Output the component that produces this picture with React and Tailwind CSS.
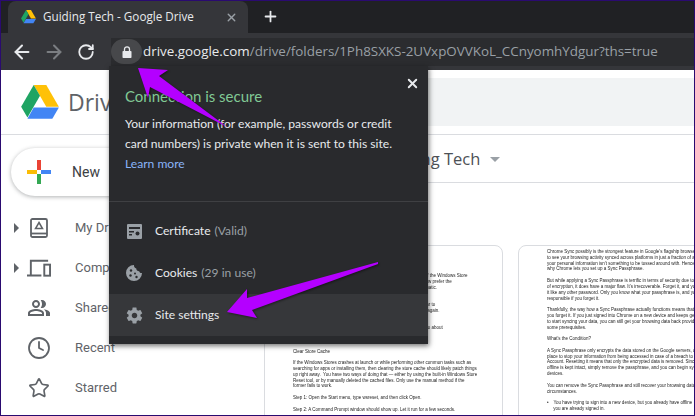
import { X, Plus, ArrowLeft, ArrowRight, RotateCw, Clock, Star } from "lucide-react";

const doc1 = [
  ["Lately, I have been having all sorts of issues with the default apps of the Windows Store", "and I have moved on to their desktop counterparts instead. And I now prefer the", "desktop versions of the apps since they are faster, stable and automatic.", "Really."],
  ["The Windows Store has always had its quirks, but when it did appear to", "be functioning I kept running into a load of issues, never seek once again.", "So."],
  ["So if you are having issues with the Store, here is how you should go about", "fixing it once and for all, since the fixes out there are numerous", "Here."],
  ["Clear Store Cache"],
  ["If the Windows Stores crashes at launch or while performing other common tasks such as", "searching for apps or installing them, then clearing the store cache should likely patch things", "up right away.  You have two ways of doing that — either by using the built-in Windows Store", "Reset tool, or by manually deleted the cached files. Only use the manual method if the", "former fails to work."],
  ["Step 1: Open the Start menu, type wsreset, and then click Open."],
  ["Step 2: A Command Prompt window should show up. Let it run for a few seconds."],
];

const doc2 = [
  ["Chrome Sync possibly is the strongest feature in Google's flagship browser. It lets", "to see your browsing activity synced across platforms in just a fraction of a", "your personal information isn't something to be tossed around with. Hence", "why Chrome lets you set up a Sync Passphrase."],
  ["But while applying a Sync Passphrase is terrific in terms of security due to the", "of encryption, it does have a major flaw. It's irrecoverable. Forget it, and you", "it like any other password. Only you know what your passphrase is, and you", "responsible if you forget it."],
  ["Thankfully, the way how a Sync Passphrase actually functions means that all", "you forget it. If you just signed into Chrome on a new device and keeps getting", "to start syncing your data, you can still get your browsing data back provided", "some prerequisites."],
  ["What's the Condition?"],
  ["A Sync Passphrase only encrypts the data stored on the Google servers, and", "place to stop your information from being accessed in case of a breach to your", "Account. Resetting it means that only the encrypted data is removed. Since", "offline is kept intact, simply remove the passphrase, and you can begin sync", "devices."],
  ["You can remove the Sync Passphrase and still recover your browsing data under", "circumstances."],
  ["•    You have trying to sign into a new device, but you already have offline", "     you are already signed in."],
];

function DriveLogo({ size }) {
  return (
    <svg width={size} height={size * 0.89} viewBox="0 0 87 78">
      <path d="M29 0 L58 0 L87 50 L58 50 Z" fill="#ffc107" />
      <path d="M29 0 L43.5 25 L14.5 75 L0 50 Z" fill="#1fa463" />
      <path d="M29 52 L87 52 L72 78 L14.5 78 Z" fill="#4285f4" />
    </svg>
  );
}

function DocText({ lines }) {
  return (
    <div className="text-[4.5px] leading-[5.82px] text-[#222] whitespace-pre blur-[0.3px] font-['Liberation_Sans',sans-serif]">
      {lines.map((p, i) => (
        <div key={i} className="mb-[5.82px]">
          {p.map((l, j) => (
            <div key={j}>{l}</div>
          ))}
        </div>
      ))}
    </div>
  );
}

function SideRow({ icon, label, arrow }) {
  return (
    <div className="h-10 flex items-center relative pl-[26px]">
      {arrow && <div className="absolute left-[13px] w-0 h-0 border-y-[5px] border-y-transparent border-l-[5px] border-l-[#5f6368]" />}
      <div className="w-[24px] flex justify-center text-[#5f6368]">{icon}</div>
      <span className="ml-[24px] text-[13px] text-[#5f6368] whitespace-nowrap font-['Roboto',sans-serif]">{label}</span>
    </div>
  );
}

function PopRow({ icon, label, note, active }) {
  return (
    <div className={`h-[42px] flex items-center pl-[17px] ${active ? "bg-[#36373a]" : ""}`}>
      <div className="w-[16px] flex justify-center text-[#9aa0a6]">{icon}</div>
      <span className="ml-[13px] text-[12.1px] text-[#e8eaed] font-['Lato',sans-serif]">{label}</span>
      {note && <span className="ml-1 text-[12.1px] text-[#9aa0a6] font-['Lato',sans-serif]">{note}</span>}
    </div>
  );
}

export default function App() {
  return (
    <div className="w-[695px] h-[416px] relative overflow-hidden bg-white border border-[#2a0a70] font-['Open_Sans',sans-serif]">
      {/* tabs */}
      <div className="h-[32px] bg-[#202124] flex items-end pl-[7px]">
        <div className="w-[240px] h-[32px] bg-[#35363a] rounded-t-lg flex items-center pl-[13px]">
          <DriveLogo size={15} />
          <span className="ml-[7px] text-[11.7px] text-[#e8eaed] whitespace-nowrap">Guiding Tech - Google Drive</span>
          <X size={13} strokeWidth={2.5} className="ml-[31px] text-[#9aa0a6]" />
        </div>
        <Plus size={17} strokeWidth={2.5} className="ml-[14px] mb-[8px] text-[#e8eaed]" />
      </div>

      {/* toolbar */}
      <div className="h-[37px] bg-[#35363a] flex items-center pl-[10px]">
        <ArrowLeft size={22} strokeWidth={2.2} className="text-[#e8eaed]" />
        <ArrowRight size={22} strokeWidth={2.2} className="ml-[10px] text-[#7b7e82]" />
        <RotateCw size={18} strokeWidth={2.4} className="ml-[12px] text-[#e8eaed]" />
        <div className="ml-[16px] flex-1 h-[28px] bg-[#2b2c2f] flex items-center">
          <div className="w-[31px] h-[25px] rounded-full bg-[#47484b] flex items-center justify-center">
            <svg width="10" height="12" viewBox="0 0 10 12" className="text-[#e8eaed]">
              <path d="M2.500 5V3.300a2.500 2.500 0 0 1 5 0V5" fill="none" stroke="currentColor" strokeWidth="1.300" />
              <rect x="0.500" y="5" width="9" height="7" rx="0.800" fill="currentColor" />
            </svg>
          </div>
          <span className="ml-[1px] text-[13.4px] text-[#e8eaed] whitespace-nowrap">
            drive.google.com<span className="text-[#9aa0a6]">/drive/folders/1Ph8SXKS-2UVxpOVVKoL_CCnyomhYdgur?ths=true</span>
          </span>
        </div>
      </div>

      {/* drive page */}
      <div className="h-[65px] flex items-center border-b border-[#dadce0]">
        <div className="ml-[20px]"><DriveLogo size={38} /></div>
        <span className="ml-[9px] text-[23px] text-[#5f6368]">Drive</span>
        <div className="ml-auto w-[340px] h-[48px] bg-[#f1f3f4]" />
      </div>

      <div className="flex">
        <div className="w-[263px] shrink-0">
          <div className="ml-[10px] mt-[13px] mb-[12px] w-[140px] h-[48px] rounded-full bg-white shadow-[0_1px_4px_rgba(60,64,67,0.4)] flex items-center pl-[16px]">
            <svg width="24" height="24" viewBox="0 0 24 24">
              <path d="M10 0h4v10h-4z" fill="#ea4335" />
              <path d="M14 10h10v4H14z" fill="#4285f4" />
              <path d="M10 14h4v10h-4z" fill="#34a853" />
              <path d="M0 10h10v4H0z" fill="#fbbc05" />
            </svg>
            <span className="ml-[21px] text-[14px] text-[#3c4043] font-['Roboto',sans-serif]">New</span>
          </div>
          <SideRow arrow label="My Drive" icon={
            <svg width="18" height="20" viewBox="0 0 18 20" fill="none" stroke="currentColor" strokeWidth="1.800">
              <rect x="1" y="1" width="16" height="18" rx="1.500" />
              <path d="M1 15.500h16" />
              <path d="M9 4.500l3.500 6h-7z" strokeWidth="1.500" />
            </svg>
          } />
          <SideRow arrow label="Computers" icon={
            <svg width="25" height="18" viewBox="0 0 25 18" fill="none" stroke="currentColor" strokeWidth="2">
              <path d="M4 16V1.500h18M0 16.800h15" />
              <rect x="18" y="5.500" width="6" height="11.500" />
            </svg>
          } />
          <SideRow label="Shared with me" icon={
            <svg width="26" height="26" viewBox="0 0 24 24" fill="currentColor">
              <path d="M16.670 13.130C18.040 14.060 19 15.320 19 17v3h4v-3c0-2.180-3.570-3.470-6.330-3.870zM15 12c2.210 0 4-1.790 4-4s-1.790-4-4-4c-.47 0-.91.1-1.330.24C14.500 5.270 15 6.580 15 8s-.5 2.730-1.330 3.760c.42.14.86.24 1.330.24zM9 12c2.210 0 4-1.790 4-4s-1.790-4-4-4-4 1.790-4 4 1.790 4 4 4zm0-6c1.100 0 2 .9 2 2s-.9 2-2 2-2-.9-2-2 .9-2 2-2zM9 13c-2.670 0-8 1.340-8 4v3h16v-3c0-2.660-5.330-4-8-4zm6 5H3v-.99C3.200 16.290 6.300 15 9 15s5.800 1.290 6 2v1z" />
            </svg>
          } />
          <SideRow label="Recent" icon={<Clock size={24} strokeWidth={1.800} />} />
          <SideRow label="Starred" icon={<Star size={22} strokeWidth={1.800} />} />
        </div>

        <div className="flex-1 relative">
          <div className="h-[48px] flex items-center pt-[1px] pl-[116px] border-b border-[#dadce0] text-[16.5px] text-[#4d5156] whitespace-nowrap -ml-[14px]">
            <span className="ml-[14px]">Guiding Tech</span>
            <div className="ml-[10px] w-0 h-0 border-x-[5px] border-x-transparent border-t-[5px] border-t-[#9aa0a6]" />
          </div>
          <div className="mt-[62px] flex gap-[15px]">
            <div className="w-[239px] h-[200px] shrink-0 border border-[#dadce0] rounded-t-lg pt-[27px] pl-[28px] overflow-hidden">
              <DocText lines={doc1} />
            </div>
            <div className="w-[239px] h-[200px] shrink-0 border border-[#dadce0] rounded-t-lg pt-[3px] pl-[28px] overflow-hidden">
              <DocText lines={doc2} />
            </div>
          </div>
        </div>
      </div>

      {/* security popup */}
      <div className="absolute left-[108px] top-[65px] w-[319px] h-[278px] bg-[#292a2d] shadow-[1px_2px_5px_rgba(0,0,0,0.55)] font-['Lato',sans-serif]">
        <X size={15} strokeWidth={3} className="absolute right-[8px] top-[10px] text-[#e8eaed]" />
        <div className="h-[136px] pt-[20px] pl-[16px] border-b border-[#3f4043]">
          <div className="text-[15px] leading-[20px] text-[#81c995]">Connection is secure</div>
          <div className="mt-[8px] text-[12.1px] leading-[20px] text-[#e8eaed] whitespace-nowrap">
            Your information (for example, passwords or credit<br />card numbers) is private when it is sent to this site.
          </div>
          <div className="text-[12.1px] leading-[20px] text-[#8ab4f8]">Learn more</div>
        </div>
        <div className="pt-[8px]">
          <PopRow label="Certificate" note="(Valid)" icon={
            <svg width="15" height="15" viewBox="0 0 15 15">
              <path fillRule="evenodd" d="M1 0h13a1 1 0 0 1 1 1v13a1 1 0 0 1-1 1H1a1 1 0 0 1-1-1V1a1 1 0 0 1 1-1zM2 3v2h11V3zM2 7v1.500h5V7zM2 10v1.500h3V10z" fill="currentColor" />
              <circle cx="10.500" cy="9.500" r="2" fill="#292a2d" />
            </svg>
          } />
          <PopRow label="Cookies" note="(29 in use)" icon={
            <svg width="16" height="16" viewBox="0 0 16 16">
              <path d="M8 0a8 8 0 1 0 8 8c-1.500.3-2.600-.5-2.800-1.800C11.800 6.300 10 5.200 10.300 3.500 8.800 3.300 7.800 1.500 8 0z" fill="currentColor" />
              <circle cx="5" cy="5.500" r="1.200" fill="#292a2d" />
              <circle cx="4.500" cy="10.500" r="1.200" fill="#292a2d" />
              <circle cx="9" cy="8.500" r="1" fill="#292a2d" />
              <circle cx="10.500" cy="12" r="1.200" fill="#292a2d" />
            </svg>
          } />
          <PopRow active label="Site settings" icon={
            <svg width="19" height="19" viewBox="0 0 24 24" fill="currentColor" className="shrink-0">
              <path d="M19.430 12.980c.04-.32.07-.64.07-.98s-.03-.66-.07-.98l2.110-1.650c.19-.15.24-.42.12-.64l-2-3.460c-.12-.22-.39-.3-.61-.22l-2.490 1c-.52-.4-1.080-.73-1.690-.98l-.38-2.650C14.460 2.180 14.250 2 14 2h-4c-.25 0-.46.18-.49.42l-.38 2.650c-.61.25-1.170.59-1.690.98l-2.490-1c-.23-.09-.49 0-.61.22l-2 3.460c-.13.22-.07.49.12.64l2.110 1.650c-.04.32-.07.65-.07.98s.03.66.07.98l-2.110 1.650c-.19.15-.24.42-.12.64l2 3.460c.12.22.39.3.61.22l2.490-1c.52.4 1.080.73 1.690.98l.38 2.650c.03.24.24.42.49.42h4c.25 0 .46-.18.49-.42l.38-2.650c.61-.25 1.170-.59 1.690-.98l2.490 1c.23.09.49 0 .61-.22l2-3.460c.12-.22.07-.49-.12-.64l-2.110-1.650zM12 15.500c-1.930 0-3.500-1.570-3.500-3.500s1.570-3.500 3.500-3.500 3.500 1.570 3.500 3.500-1.570 3.500-3.500 3.500z" />
            </svg>
          } />
        </div>
      </div>

      {/* arrows drawn on the screenshot */}
      <svg className="absolute -left-px -top-px pointer-events-none drop-shadow-[1px_1px_1px_rgba(0,0,0,0.45)]" width="695" height="416">
        <path d="M138 68 L168 70 L159 76 L227 127 L150 87 L148 98 Z" fill="#b400ff" />
        <path d="M378 262 L247 298 L247 289 L227 312 L257 318 L252 310 L378 264 Z" fill="#b400ff" />
      </svg>
    </div>
  );
}
